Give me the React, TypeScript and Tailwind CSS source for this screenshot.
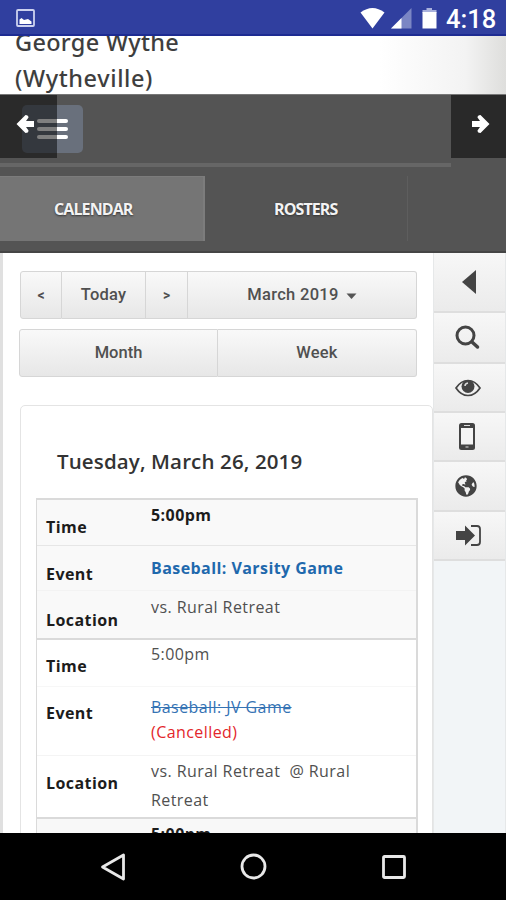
import { ReactNode } from "react";
import { FaGlobeAmericas } from "react-icons/fa";

type ScheduleRow = {
  label: string;
  rowClass: string;
  labelClass: string;
  valueClass: string;
  value: ReactNode;
};

const varsityRows: ScheduleRow[] = [
  { label: "Time", rowClass: "h-[46px] border-b border-[#e6e6e6]", labelClass: "pt-[15px]", valueClass: "pt-[3px] font-bold text-[#1c1c1c]", value: "5:00pm" },
  { label: "Event", rowClass: "h-[45px] border-b border-[#f3f3f3]", labelClass: "pt-[16px]", valueClass: "pt-[10px] font-bold text-[#1f69ad]", value: <a href="#">Baseball: Varsity Game</a> },
  { label: "Location", rowClass: "h-[47px]", labelClass: "pt-[17px]", valueClass: "pt-[4px]", value: "vs. Rural Retreat" },
];

const jvRows: ScheduleRow[] = [
  { label: "Time", rowClass: "h-[47px] border-b border-[#f7f7f7]", labelClass: "pt-[14px]", valueClass: "pt-[2px]", value: "5:00pm" },
  {
    label: "Event",
    rowClass: "h-[69px] border-b border-[#f4f4f4]",
    labelClass: "pt-[14px]",
    valueClass: "pt-[8px] leading-[25px]",
    value: (
      <>
        <a href="#" className="block text-[#3573b4] line-through">Baseball: JV Game</a>
        <span className="block text-[#e3262b]">(Cancelled)</span>
      </>
    ),
  },
  { label: "Location", rowClass: "h-[61px]", labelClass: "pt-[15px]", valueClass: "pt-[1px] leading-[29px]", value: <>vs. Rural Retreat&nbsp; @ Rural Retreat</> },
];

const toolButton = "flex items-center justify-center border-[#d6d6d6] bg-gradient-to-b from-[#f9f9f9] to-[#e7e7e7]";

export default function App() {
  return (
    <div className="flex h-[900px] w-[506px] flex-col overflow-hidden bg-white font-['Open_Sans',sans-serif]">
      <StatusBar />
      <header className="h-[58px] shrink-0 overflow-hidden bg-gradient-to-r from-white from-75% via-[#f3f3f3] via-92% to-[#dededc] pl-[15px]">
        <h1 className="-mt-[12px] w-[240px] font-['Noto_Sans',sans-serif] text-[23.5px] font-medium leading-[36px] text-[#3e3e3e]">
          <span className="block tracking-[0.3px]">George Wythe</span>
          <span className="block tracking-[0.6px]">(Wytheville)</span>
        </h1>
      </header>
      <NavBar />
      <main className="flex min-h-0 flex-1 overflow-hidden">
        <div className="w-[433px] shrink-0 border-l-[3px] border-[#e0e0e0] pl-[17px] pt-[18px]">
          <Toolbar />
          <section className="mt-[28px] h-[500px] w-[413px] rounded-tl-[5px] rounded-tr-[5px] border border-[#e4e4e4] pl-[15px]">
            <h2 className="mt-[39px] pl-[21px] text-[20.5px] font-semibold leading-[32px] tracking-[0.13px] text-[#333]">
              Tuesday, March 26, 2019
            </h2>
            <div className="mt-[21px] w-[382px] border-2 border-l border-[#dadada] text-[16px] leading-[24px] tracking-[0.43px] text-[#505050]">
              <div className="border-b-2 border-[#dadada] bg-[#f9f9f9]">
                {varsityRows.map((row) => <Row key={row.label} row={row} />)}
              </div>
              <div className="border-b-2 border-[#dadada]">
                {jvRows.map((row) => <Row key={row.label} row={row} />)}
              </div>
              <div className="h-[50px] bg-[#f8f8f8] pl-[114px] pt-[3px] font-bold text-[#1c1c1c]">5:00pm</div>
            </div>
          </section>
        </div>
        <SideTools />
      </main>
      <AndroidNav />
    </div>
  );
}

function StatusBar() {
  return (
    <div className="flex h-[36px] shrink-0 items-start border-b-2 border-[#1d2b92] bg-[#303f9f]">
      <svg className="ml-[16px] mt-[9px]" width="19" height="18" viewBox="0 0 19 18">
        <rect x="1" y="1" width="17" height="16" rx="1" fill="none" stroke="#cdd2ef" strokeWidth="1.8" />
        <path d="M3.500 15v-4.500l2-1.500 2.500 2 4-1 3.500 2.500V15z" fill="#fff" />
      </svg>
      <svg className="ml-auto mt-[7px]" width="25" height="22" viewBox="0 0 25 22">
        <path d="M0.500 5.500Q12.500-3.500 24.500 5.500L12.500 21.500z" fill="#fff" />
      </svg>
      <svg className="ml-[5px] mt-[8px]" width="22" height="21" viewBox="0 0 22 21">
        <path d="M21.500 0v20.500H1z" fill="#7b86c4" />
        <path d="M11.500 10v10.500H1z" fill="#fff" />
      </svg>
      <svg className="ml-[10px] mt-[8px]" width="15" height="21" viewBox="0 0 15 21">
        <path d="M4.500 0h5.500v2h4.500v3H0.500V2h4z" fill="#a9b1dc" />
        <path d="M0.500 4h14v16.500H0.500z" fill="#fff" />
      </svg>
      <span className="ml-[9px] mr-[10px] mt-[4px] w-[50px] whitespace-nowrap font-['Roboto',sans-serif] text-[25.5px] font-medium leading-[30px] text-white">4:18</span>
    </div>
  );
}

function NavBar() {
  return (
    <nav className="h-[159px] shrink-0 border-b-2 border-t border-b-[#454545] border-t-[#777] bg-[#545454]">
      <div className="relative flex h-[63px] justify-between">
        <div className="ml-[22px] mt-[10px] flex h-[48px] w-[61px] flex-col justify-center gap-[4px] rounded-[5px] bg-[#69707c] pl-[15px]">
          <span className="h-[4px] w-[31px] rounded-sm bg-white" />
          <span className="h-[4px] w-[31px] rounded-sm bg-white" />
          <span className="h-[4px] w-[31px] rounded-sm bg-white" />
        </div>
        <button className="absolute left-0 top-0 h-[63px] w-[57px] bg-black/50 pl-[16px]">
          <ArrowIcon className="-mt-[6px] rotate-180" />
        </button>
        <button className="h-[63px] w-[55px] bg-[#292929] pl-[20px]">
          <ArrowIcon className="-mt-[6px]" />
        </button>
      </div>
      <div className="mt-[5px] h-[4px] w-[451px] bg-[#666]" />
      <div className="mt-[9px] flex h-[65px] text-[16px] font-bold text-[#f3f3f3] [text-shadow:0_1px_2px_#333]">
        <a href="#" className="flex w-[205px] items-center border-r-2 border-t border-[#7c7c7c] bg-[#757575] pl-[54px] tracking-[-0.9px]">CALENDAR</a>
        <a href="#" className="flex w-[203px] items-center border-r border-[#5e5e5e] pl-[69px] tracking-[-0.9px]">ROSTERS</a>
      </div>
    </nav>
  );
}

function ArrowIcon({ className }: { className: string }) {
  return (
    <svg className={className} width="19" height="20" viewBox="0 0 19 20">
      <path d="M1 7h8L6.500 3.500Q6.500 1 9.500 1L18.500 10l-9 9q-3 0-3-2.500L9 13H1z" fill="#fff" />
    </svg>
  );
}

function Toolbar() {
  return (
    <div className="w-[397px] font-['Roboto',sans-serif] text-[16.500px] font-medium text-[#505050]">
      <div className="flex h-[48px]">
        <button className={`${toolButton} w-[42px] rounded-l-[3px] border text-[14px] font-bold`}>&lt;</button>
        <button className={`${toolButton} w-[84px] border-y border-r tracking-[0.2px]`}>Today</button>
        <button className={`${toolButton} w-[42px] border-y border-r text-[14px] font-bold`}>&gt;</button>
        <button className={`${toolButton} w-[229px] gap-[7px] rounded-r-[3px] border-y border-r tracking-[0.3px]`}>
          March 2019
          <svg className="mt-[2px]" width="11" height="6" viewBox="0 0 11 6"><path d="M0.500 0.500h10L5.500 6z" fill="#555" /></svg>
        </button>
      </div>
      <div className="-ml-px mt-[10px] flex h-[48px] w-[398px]">
        <button className={`${toolButton} w-[199px] rounded-l-[3px] border`}>Month</button>
        <button className={`${toolButton} w-[199px] rounded-r-[3px] border-y border-r tracking-[0.2px]`}>Week</button>
      </div>
    </div>
  );
}

function Row({ row }: { row: ScheduleRow }) {
  return (
    <div className={`flex ${row.rowClass}`}>
      <div className={`w-[114px] shrink-0 pl-[9px] font-bold text-[#1c1c1c] ${row.labelClass}`}>{row.label}</div>
      <div className={`w-[215px] ${row.valueClass}`}>{row.value}</div>
    </div>
  );
}

function SideTools() {
  return (
    <aside className="w-[73px] border-x border-[#e6e8e9] bg-[#f2f5f7] text-[#444]">
      <SideButton className="h-[60px]">
        <svg className="ml-[28px]" width="14" height="24" viewBox="0 0 14 24"><path d="M14 0v24L0 12z" fill="currentColor" /></svg>
      </SideButton>
      <SideButton className="h-[51px]">
        <svg className="ml-[21px]" width="25" height="25" viewBox="0 0 25 25" fill="none" stroke="currentColor">
          <circle cx="10.500" cy="10.500" r="8.500" strokeWidth="3" />
          <path d="M17 17L22.500 22" strokeWidth="3.500" strokeLinecap="round" />
        </svg>
      </SideButton>
      <SideButton className="h-[49px]">
        <svg className="ml-[21px]" width="26" height="18" viewBox="0 0 26 18">
          <path d="M1 9Q6 1.500 13 1.500T25 9Q20 16.500 13 16.500T1 9z" fill="none" stroke="currentColor" strokeWidth="1.700" />
          <circle cx="13" cy="7.500" r="6.500" fill="currentColor" />
          <path d="M10 7Q10 4.500 13 4" fill="none" stroke="#ddd" strokeWidth="1.500" />
        </svg>
      </SideButton>
      <SideButton className="h-[49px]">
        <svg className="ml-[25px]" width="16" height="27" viewBox="0 0 16 27">
          <rect width="16" height="27" rx="2.500" fill="currentColor" />
          <path d="M2 5h12v16.500H2z" fill="#f4f4f4" />
          <path d="M5 2.500h6M6.500 24h3" stroke="#ddd" strokeWidth="1.200" />
        </svg>
      </SideButton>
      <SideButton className="h-[50px]">
        <FaGlobeAmericas className="ml-[21px] h-[22px] w-[22px]" />
      </SideButton>
      <SideButton className="h-[49px]">
        <svg className="ml-[22px]" width="26" height="21" viewBox="0 0 26 21">
          <path d="M0 6h9V0.500L19 10.500 9 20.500V15H0z" fill="currentColor" />
          <path d="M15 1h6q3 0 3 3v13q0 3-3 3h-6" fill="none" stroke="currentColor" strokeWidth="1.800" />
        </svg>
      </SideButton>
    </aside>
  );
}

function SideButton({ className, children }: { className: string; children: ReactNode }) {
  return (
    <button className={`flex w-full items-center border-b-2 border-[#dedede] bg-gradient-to-b from-[#f7f7f7] to-[#ebebeb] ${className}`}>
      {children}
    </button>
  );
}

function AndroidNav() {
  return (
    <footer className="flex h-[67px] shrink-0 items-center bg-black text-[#e8e8e8]">
      <svg className="ml-[100px]" width="26" height="28" viewBox="0 0 26 28" fill="none" stroke="currentColor" strokeWidth="2.800" strokeLinejoin="round">
        <path d="M23.500 2v24L2.500 14z" />
      </svg>
      <svg className="ml-[114px]" width="27" height="27" viewBox="0 0 27 27" fill="none" stroke="currentColor" strokeWidth="2.800">
        <circle cx="13.500" cy="13.500" r="11.500" />
      </svg>
      <svg className="ml-[115px]" width="24" height="24" viewBox="0 0 24 24" fill="none" stroke="currentColor" strokeWidth="2.800">
        <rect x="1.500" y="1.500" width="21" height="21" rx="1" />
      </svg>
    </footer>
  );
}
